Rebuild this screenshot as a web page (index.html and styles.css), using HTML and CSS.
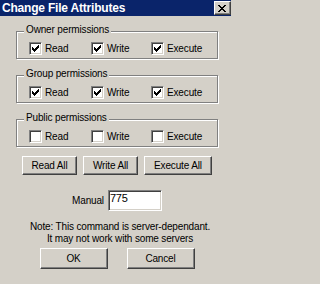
FILE: index.html
```html
<!DOCTYPE html>
<html>
<head>
<meta charset="utf-8">
<link rel="stylesheet" href="styles.css">
</head>
<body>
<div class="window">
  <div class="titlebar">
    <span class="title">Change File Attributes</span>
    <span class="close"><svg class="xglyph" width="8" height="7" viewBox="0 0 8 7" shape-rendering="crispEdges"><path d="M0 0h2v1H0zM6 0h2v1H6zM1 1h2v1H1zM5 1h2v1H5zM2 2h4v1H2zM3 3h2v1H3zM2 4h4v1H2zM1 5h2v1H1zM5 5h2v1H5zM0 6h2v1H0zM6 6h2v1H6z" fill="#000"/></svg></span>
  </div>
  <div class="content">
    <div class="group">
      <span class="legend">Owner permissions</span>
      <div class="opts">
        <label class="opt"><span class="cb"><svg class="mark" width="11" height="11" viewBox="1 1 11 11" shape-rendering="crispEdges"><path d="M3 5h1v3H3zM4 6h1v3H4zM5 7h1v3H5zM6 6h1v3H6zM7 5h1v3H7zM8 4h1v3H8zM9 3h1v3H9z" fill="#000"/></svg></span>Read</label>
        <label class="opt"><span class="cb"><svg class="mark" width="11" height="11" viewBox="1 1 11 11" shape-rendering="crispEdges"><path d="M3 5h1v3H3zM4 6h1v3H4zM5 7h1v3H5zM6 6h1v3H6zM7 5h1v3H7zM8 4h1v3H8zM9 3h1v3H9z" fill="#000"/></svg></span>Write</label>
        <label class="opt"><span class="cb"><svg class="mark" width="11" height="11" viewBox="1 1 11 11" shape-rendering="crispEdges"><path d="M3 5h1v3H3zM4 6h1v3H4zM5 7h1v3H5zM6 6h1v3H6zM7 5h1v3H7zM8 4h1v3H8zM9 3h1v3H9z" fill="#000"/></svg></span>Execute</label>
      </div>
    </div>
    <div class="group">
      <span class="legend">Group permissions</span>
      <div class="opts">
        <label class="opt"><span class="cb"><svg class="mark" width="11" height="11" viewBox="1 1 11 11" shape-rendering="crispEdges"><path d="M3 5h1v3H3zM4 6h1v3H4zM5 7h1v3H5zM6 6h1v3H6zM7 5h1v3H7zM8 4h1v3H8zM9 3h1v3H9z" fill="#000"/></svg></span>Read</label>
        <label class="opt"><span class="cb"><svg class="mark" width="11" height="11" viewBox="1 1 11 11" shape-rendering="crispEdges"><path d="M3 5h1v3H3zM4 6h1v3H4zM5 7h1v3H5zM6 6h1v3H6zM7 5h1v3H7zM8 4h1v3H8zM9 3h1v3H9z" fill="#000"/></svg></span>Write</label>
        <label class="opt"><span class="cb"><svg class="mark" width="11" height="11" viewBox="1 1 11 11" shape-rendering="crispEdges"><path d="M3 5h1v3H3zM4 6h1v3H4zM5 7h1v3H5zM6 6h1v3H6zM7 5h1v3H7zM8 4h1v3H8zM9 3h1v3H9z" fill="#000"/></svg></span>Execute</label>
      </div>
    </div>
    <div class="group">
      <span class="legend">Public permissions</span>
      <div class="opts">
        <label class="opt"><span class="cb"></span>Read</label>
        <label class="opt"><span class="cb"></span>Write</label>
        <label class="opt"><span class="cb"></span>Execute</label>
      </div>
    </div>
    <div class="allrow">
      <button class="btn btn-all">Read All</button>
      <button class="btn btn-all">Write All</button>
      <button class="btn btn-all btn-wide">Execute All</button>
    </div>
    <div class="manual">
      <span class="manual-label">Manual</span>
      <input class="field" type="text" value="775">
    </div>
    <p class="note">Note: This command is server-dependant.<br>It may not work with some servers</p>
    <div class="okrow">
      <button class="btn btn-dlg">OK</button>
      <button class="btn btn-dlg">Cancel</button>
    </div>
  </div>
</div>
</body>
</html>
```

FILE: styles.css
```css
* { box-sizing: border-box; }
html, body { margin: 0; padding: 0; }
body {
  background: #d4d0c8;
  font-family: "Liberation Sans", Arial, sans-serif;
  font-size: 10px;
  letter-spacing: -0.15px;
  color: #000;
  width: 231px;
  height: 284px;
  overflow: hidden;
}
.titlebar {
  height: 16px;
  background: #0a246a;
  display: flex;
  justify-content: space-between;
  align-items: flex-start;
}
.title {
  color: #fff;
  font-weight: bold;
  font-size: 12px;
  letter-spacing: -0.2px;
  line-height: 14px;
  margin-top: 1px;
  padding-left: 2px;
  white-space: nowrap;
}
.close {
  width: 17px;
  height: 14px;
  margin-top: 1px;
  background: #d4d0c8;
  border: 1px solid;
  border-color: #fff #404040 #404040 #fff;
  box-shadow: inset -1px -1px 0 #808080;
  display: block;
}
.xglyph { display: block; margin: 3px 0 0 3px; }
.content {
  padding: 0 13px 0 16px;
}
.group {
  position: relative;
  margin-top: 16px;
  border: 1px solid #808080;
  box-shadow: inset 1px 1px 0 #fff, 1px 1px 0 #fff;
  padding: 10px 0 3px 12px;
}
.group:first-child { margin-top: 15px; }
.legend {
  position: absolute;
  top: -8px;
  left: 7px;
  padding: 0 2px;
  background: #d4d0c8;
  line-height: 12px;
  white-space: nowrap;
}
.opts {
  display: grid;
  grid-template-columns: 62px 60px auto;
}
.opt {
  display: flex;
  align-items: center;
  gap: 3px;
  line-height: 13px;
  height: 13px;
}
.cb {
  width: 13px;
  height: 13px;
  flex: none;
  background: #fff;
  border: 1px solid;
  border-color: #808080 #fff #fff #808080;
  box-shadow: inset 1px 1px 0 #404040, inset -1px -1px 0 #d4d0c8;
}
.mark { display: block; }
.btn {
  appearance: none;
  -webkit-appearance: none;
  margin: 0;
  padding: 0;
  background: #d4d0c8;
  border: 1px solid;
  border-color: #fff #404040 #404040 #fff;
  box-shadow: inset -1px -1px 0 #808080;
  font-family: inherit;
  font-size: 10px;
  letter-spacing: inherit;
  color: #000;
  line-height: 13px;
}
.allrow {
  display: flex;
  justify-content: center;
  gap: 6px;
  margin-top: 9px;
}
.btn-all { width: 55px; height: 19px; }
.btn-wide { width: 68px; }
.manual {
  display: flex;
  justify-content: center;
  align-items: center;
  gap: 4px;
  margin-top: 15px;
}
.manual-label { line-height: 13px; }
.field {
  width: 54px;
  height: 21px;
  margin: 0;
  padding: 0 0 5px 1px;
  background: #fff;
  border: 1px solid;
  border-color: #808080 #fff #fff #808080;
  box-shadow: inset 1px 1px 0 #404040, inset -1px -1px 0 #d4d0c8;
  font-family: inherit;
  font-size: 11px;
  letter-spacing: -0.2px;
  line-height: 13px;
  color: #000;
  outline: none;
}
.note {
  margin: 10px 0 0;
  padding-left: 6px;
  text-align: center;
  line-height: 12px;
  white-space: nowrap;
}
.okrow {
  display: flex;
  justify-content: center;
  gap: 19px;
  margin-top: 3px;
}
.btn-dlg { width: 68px; height: 21px; }
```
